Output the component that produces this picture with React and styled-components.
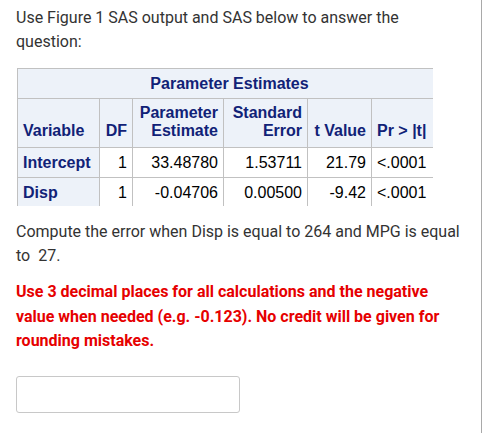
import React from "react";
import styled, { createGlobalStyle } from "styled-components";

const rows = [
  { name: "Intercept", df: 1, est: "33.48780", se: "1.53711", t: "21.79", p: "<.0001" },
  { name: "Disp", df: 1, est: "-0.04706", se: "0.00500", t: "-9.42", p: "<.0001" },
];

export default function App() {
  return (
    <>
      <GlobalStyle />
      <Page>
        <Question>
          <Text>Use Figure 1 SAS output and SAS below to answer the question:</Text>
          <Figure>
            <Table>
              <colgroup>
                <col style={{ width: 82 }} />
                <col style={{ width: 33 }} />
                <col style={{ width: 91 }} />
                <col style={{ width: 84 }} />
                <col style={{ width: 64 }} />
                <col style={{ width: 70 }} />
              </colgroup>
              <thead>
                <tr>
                  <Caption colSpan={6}>Parameter Estimates</Caption>
                </tr>
                <tr>
                  <Head $align="left">
                    <br />
                    Variable
                  </Head>
                  <Head>
                    <br />
                    DF
                  </Head>
                  <Head>
                    Parameter
                    <br />
                    Estimate
                  </Head>
                  <Head>
                    Standard
                    <br />
                    Error
                  </Head>
                  <Head>
                    <br />
                    t Value
                  </Head>
                  <Head $align="left">
                    <br />
                    Pr &gt; |t|
                  </Head>
                </tr>
              </thead>
              <tbody>
                {rows.map((r) => (
                  <tr key={r.name}>
                    <RowHead>{r.name}</RowHead>
                    <Cell>{r.df}</Cell>
                    <Cell>{r.est}</Cell>
                    <Cell>{r.se}</Cell>
                    <Cell>{r.t}</Cell>
                    <Cell $align="left">{r.p}</Cell>
                  </tr>
                ))}
              </tbody>
            </Table>
          </Figure>
          <Text>Compute the error when Disp is equal to 264 and MPG is equal to{"\u00a0"} 27.</Text>
          <Warning>
            Use 3 decimal places for all calculations and the negative value when needed (e.g. -0.123). No
            credit will be given for rounding mistakes.
          </Warning>
          <Answer type="text" />
        </Question>
      </Page>
    </>
  );
}

const GlobalStyle = createGlobalStyle`
  body {
    margin: 0;
    background: #fff;
    font-family: Roboto, "Liberation Sans", sans-serif;
  }
`;

const Page = styled.div`
  width: 482px;
  height: 433px;
  border-right: 1px solid #a9a9a9;
  box-sizing: border-box;
`;

const Question = styled.div`
  display: flex;
  flex-direction: column;
  align-items: flex-start;
  padding: 6px 0 0 16px;
`;

const Text = styled.p`
  margin: 0;
  width: 450px;
  font-size: 16px;
  line-height: 24px;
  color: #333;
`;

const Warning = styled(Text)`
  margin-top: 12px;
  color: #e60000;
  font-weight: 700;
  line-height: 24.5px;
`;

const Figure = styled.div`
  width: 416px;
  height: 138px;
  overflow: hidden;
  margin: 14px 0 14px 1px;
`;

const Table = styled.table`
  border-collapse: collapse;
  table-layout: fixed;
  width: 424px;
  font-family: "Liberation Sans", Arial, sans-serif;
  font-size: 16px;
  line-height: 18px;
  background: #fff;

  th,
  td {
    border: 1px solid #c1c1c1;
    white-space: nowrap;
    overflow: hidden;
    padding: 6px 5px 5px;
  }
`;

const Caption = styled.th`
  background: #edf2f9;
  color: #112277;
  font-weight: 700;
  text-align: center;
`;

const Head = styled.th`
  background: #edf2f9;
  color: #112277;
  font-weight: 700;
  vertical-align: bottom;
  text-align: ${(p) => p.$align || "right"};

  && {
    padding: 5px 5px 7px;
    line-height: 18px;
  }
`;

const RowHead = styled.th`
  background: #edf2f9;
  color: #112277;
  font-weight: 700;
  text-align: left;
`;

const Cell = styled.td`
  color: #000;
  text-align: ${(p) => p.$align || "right"};
`;

const Answer = styled.input`
  margin-top: 22px;
  width: 224px;
  height: 37px;
  box-sizing: border-box;
  border: 1px solid #c8c8c8;
  border-radius: 3px;
  background: #fff;
  outline: none;
`;
